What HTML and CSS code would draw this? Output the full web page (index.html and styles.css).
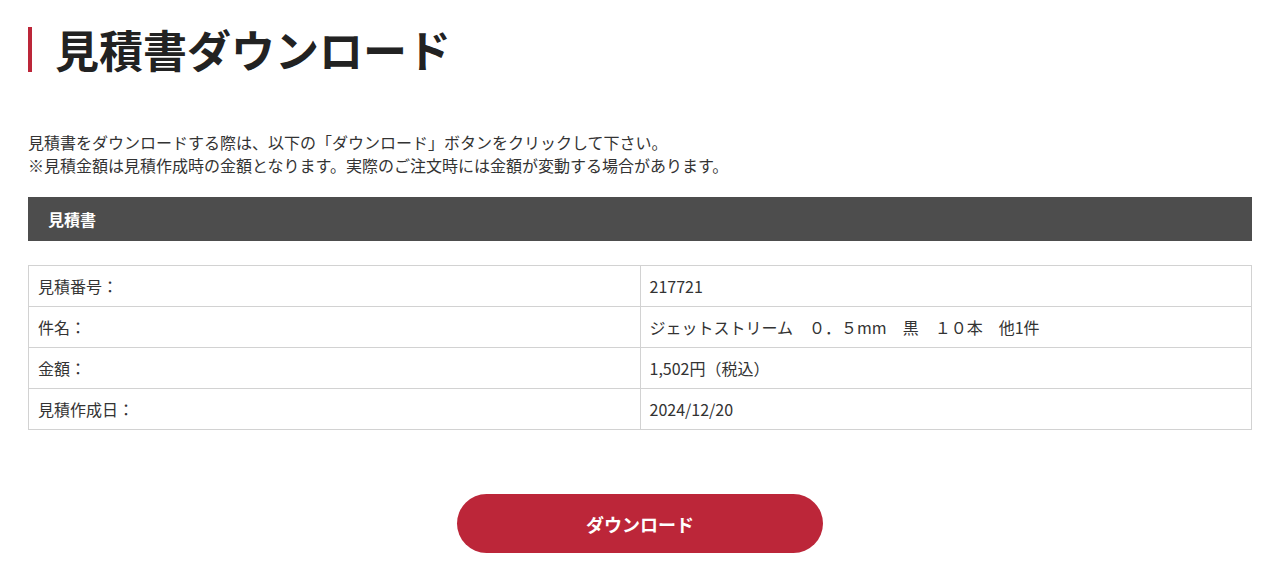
FILE: index.html
```html
<!DOCTYPE html>
<html lang="ja">
<head>
<meta charset="utf-8">
<title>見積書ダウンロード</title>
<link rel="stylesheet" href="styles.css">
</head>
<body>
<main class="page">
  <h1 class="title">見積書ダウンロード</h1>
  <div class="intro">
    <p>見積書をダウンロードする際は、以下の「ダウンロード」ボタンをクリックして下さい。</p>
    <p>※見積金額は見積作成時の金額となります。実際のご注文時には金額が変動する場合があります。</p>
  </div>
  <h2 class="section-bar">見積書</h2>
  <table class="info">
    <tr><th>見積番号：</th><td>217721</td></tr>
    <tr><th>件名：</th><td>ジェットストリーム　０．５mm　黒　１０本　他1件</td></tr>
    <tr><th>金額：</th><td>1,502円（税込）</td></tr>
    <tr><th>見積作成日：</th><td>2024/12/20</td></tr>
  </table>
  <div class="actions">
    <button class="btn" type="button">ダウンロード</button>
  </div>
</main>
</body>
</html>
```

FILE: styles.css
```css
html, body {
  margin: 0;
  padding: 0;
  background: #fff;
}
body {
  font-family: "Noto Sans CJK JP", "Noto Sans", sans-serif;
  color: #333;
}
.page {
  padding: 27px 31px 0 28px;
}
.title {
  margin: 0;
  border-left: 4px solid #bc2639;
  padding-left: 23px;
  font-size: 44px;
  line-height: 45px;
  font-weight: 700;
  color: #222;
}
.intro {
  margin-top: 59px;
  font-size: 16px;
  line-height: 23px;
  color: #333;
}
.intro p {
  margin: 0;
}
.section-bar {
  margin: 20px 0 0;
  height: 44px;
  background: #4d4d4d;
  color: #fff;
  font-size: 16px;
  font-weight: 700;
  line-height: 44px;
  padding-left: 20px;
}
.info {
  margin-top: 24px;
  width: 100%;
  border-collapse: collapse;
  table-layout: fixed;
  font-size: 16px;
  color: #333;
}
.info th, .info td {
  border: 1px solid #d2d2d2;
  height: 40px;
  padding: 0 9px;
  text-align: left;
  font-weight: 400;
}
.actions {
  display: flex;
  justify-content: center;
  margin-top: 64px;
}
.btn {
  width: 366px;
  height: 59px;
  border: none;
  border-radius: 30px;
  background: #bc2639;
  color: #fff;
  font-family: "Noto Sans CJK JP", "Noto Sans", sans-serif;
  font-size: 18px;
  font-weight: 700;
}
```
